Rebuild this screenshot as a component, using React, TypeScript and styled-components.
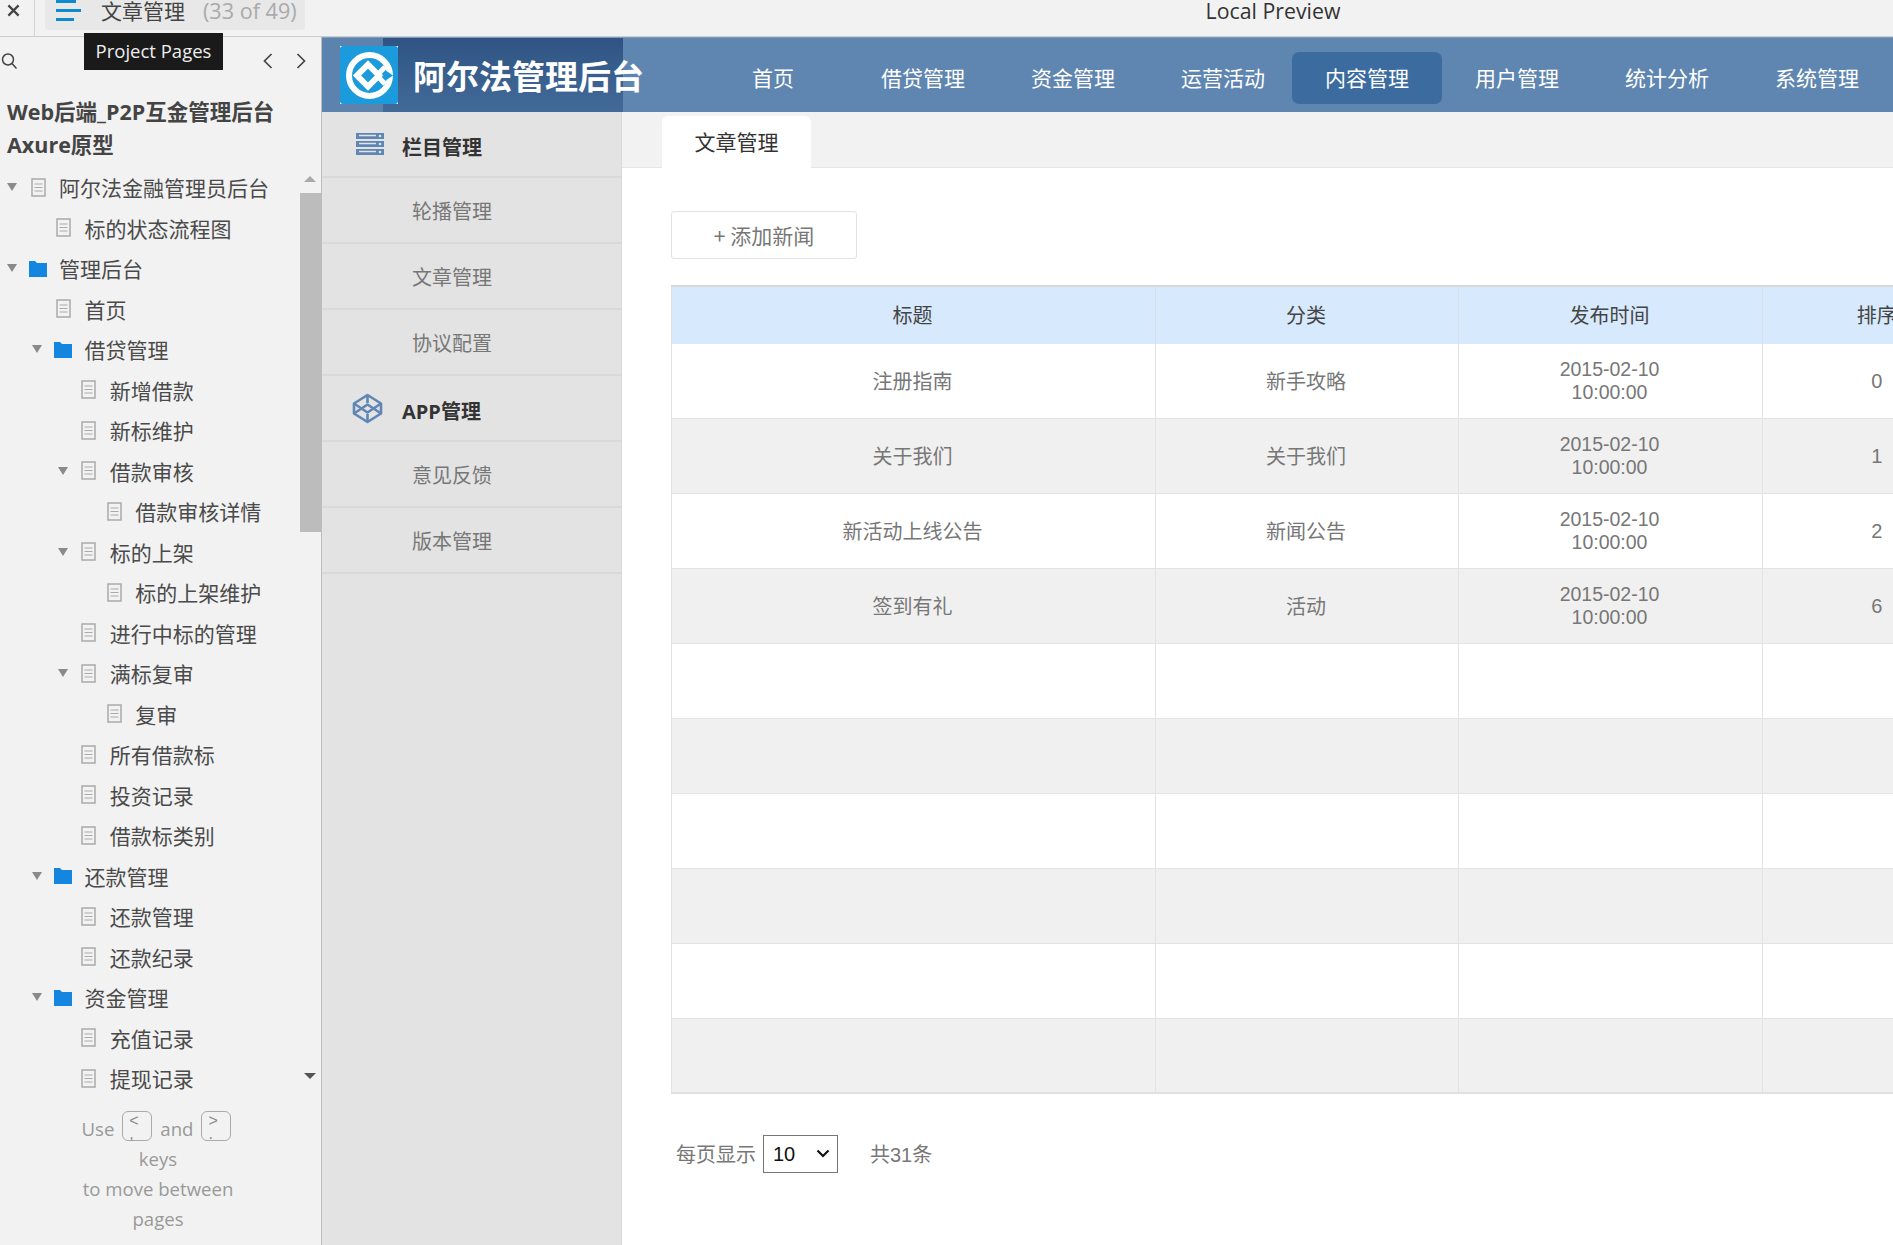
import React from "react";
import styled, { createGlobalStyle } from "styled-components";

const CJK = `"Noto Sans CJK SC", "Noto Sans", sans-serif`;
const LATIN = `"Open Sans", "Noto Sans CJK SC", sans-serif`;
const ARIAL = `"Liberation Sans", "Noto Sans CJK SC", sans-serif`;

interface TreeNode {
  label: string;
  depth: number;
  folder?: boolean;
  open?: boolean;
}

const treeNodes: TreeNode[] = [
  { label: "阿尔法金融管理员后台", depth: 0, open: true },
  { label: "标的状态流程图", depth: 1 },
  { label: "管理后台", depth: 0, folder: true, open: true },
  { label: "首页", depth: 1 },
  { label: "借贷管理", depth: 1, folder: true, open: true },
  { label: "新增借款", depth: 2 },
  { label: "新标维护", depth: 2 },
  { label: "借款审核", depth: 2, open: true },
  { label: "借款审核详情", depth: 3 },
  { label: "标的上架", depth: 2, open: true },
  { label: "标的上架维护", depth: 3 },
  { label: "进行中标的管理", depth: 2 },
  { label: "满标复审", depth: 2, open: true },
  { label: "复审", depth: 3 },
  { label: "所有借款标", depth: 2 },
  { label: "投资记录", depth: 2 },
  { label: "借款标类别", depth: 2 },
  { label: "还款管理", depth: 1, folder: true, open: true },
  { label: "还款管理", depth: 2 },
  { label: "还款纪录", depth: 2 },
  { label: "资金管理", depth: 1, folder: true, open: true },
  { label: "充值记录", depth: 2 },
  { label: "提现记录", depth: 2 },
];

const navItems = ["首页", "借贷管理", "资金管理", "运营活动", "内容管理", "用户管理", "统计分析", "系统管理"];

const articles = [
  { title: "注册指南", category: "新手攻略", order: "0" },
  { title: "关于我们", category: "关于我们", order: "1" },
  { title: "新活动上线公告", category: "新闻公告", order: "2" },
  { title: "签到有礼", category: "活动", order: "6" },
];

const GlobalStyle = createGlobalStyle`
  html, body {
    margin: 0;
    padding: 0;
    width: 1893px;
    height: 1245px;
    overflow: hidden;
    background: #fff;
    font-family: ${CJK};
  }
  * { box-sizing: border-box; }
`;

const Page = styled.div`
  width: 1893px;
  height: 1245px;
  display: flex;
  flex-direction: column;
  overflow: hidden;
  position: relative;
`;

const TopBar = styled.header`
  height: 37px;
  flex: none;
  display: flex;
  background: #f2f2f2;
  border-bottom: 1px solid #c9cdd1;
  position: relative;
`;

const CloseCell = styled.div`
  width: 35px;
  height: 36px;
  flex: none;
  display: flex;
  align-items: flex-start;
  border-right: 1px solid #d4d4d4;
  padding: 4px 0 0 7px;
`;

const PagesTab = styled.div`
  margin-left: 10px;
  width: 260px;
  height: 30px;
  flex: none;
  display: flex;
  align-items: center;
  padding: 0 0 10px 11px;
  background: #e8e8e8;
  border-radius: 0 0 4px 4px;

  svg {
    align-self: flex-start;
    flex: none;
  }
`;

const TabTitle = styled.span`
  margin-left: 20px;
  font-size: 21px;
  font-family: ${CJK};
  color: #444;
  white-space: nowrap;
`;

const TabCount = styled.span`
  margin-left: 18px;
  font-size: 21.6px;
  font-family: ${LATIN};
  color: #aaa;
  white-space: nowrap;
`;

const PreviewTitle = styled.div`
  position: absolute;
  left: 1205px;
  top: -4px;
  width: 136px;
  text-align: center;
  font-family: ${LATIN};
  font-size: 21.3px;
  color: #333;
  white-space: nowrap;
`;

const Tooltip = styled.div`
  position: absolute;
  left: 84px;
  top: 33px;
  width: 139px;
  height: 37px;
  z-index: 5;
  background: #1a1a1a;
  color: #eee;
  font-family: ${LATIN};
  font-size: 18.5px;
  line-height: 35px;
  text-align: center;
`;

const Body = styled.div`
  flex: 1;
  display: flex;
  min-height: 0;
`;

const Sidebar = styled.aside`
  width: 322px;
  flex: none;
  position: relative;
  display: flex;
  flex-direction: column;
  background: #f2f2f2;
  border-right: 1px solid #bdbdbd;
`;

const SearchRow = styled.div`
  height: 48px;
  flex: none;
  display: flex;
  align-items: center;
  padding: 0 15px 0 1px;
`;

const Pager = styled.div`
  margin-left: auto;
  display: flex;
  gap: 23px;
`;

const ProjectTitle = styled.h1`
  margin: 10px 0 6px;
  padding-left: 7px;
  font-size: 21.5px;
  line-height: 33px;
  font-weight: 700;
  color: #444;
  font-family: ${LATIN};
`;

const Tree = styled.div`
  flex: none;
`;

const TreeRow = styled.div<{ $depth: number }>`
  height: 40.5px;
  display: flex;
  align-items: center;
  padding-left: ${(p) => 7 + p.$depth * 25.4}px;
  font-size: 21px;
  color: #4a4a4a;
  white-space: nowrap;
`;

const ToggleSlot = styled.span`
  width: 22px;
  flex: none;
  display: flex;
  align-items: center;
`;

const Triangle = styled.span`
  width: 0;
  height: 0;
  border-left: 5.5px solid transparent;
  border-right: 5.5px solid transparent;
  border-top: 8px solid #8a8a8a;
`;

const IconSlot = styled.span`
  width: 18px;
  height: 20px;
  flex: none;
  display: flex;
  align-items: center;
  justify-content: center;
`;

const RowLabel = styled.span`
  margin-left: 12px;
`;

const ScrollTrack = styled.div`
  position: absolute;
  right: 0;
  top: 156px;
  width: 21px;
  height: 339px;
  background: #bcbcbc;
`;

const ScrollArrow = styled.span<{ $up?: boolean }>`
  position: absolute;
  left: 304px;
  top: ${(p) => (p.$up ? 139 : 1036)}px;
  width: 0;
  height: 0;
  border-left: 6px solid transparent;
  border-right: 6px solid transparent;
  ${(p) =>
    p.$up
      ? "border-bottom: 6px solid #aaa;"
      : "border-top: 6px solid #555;"}
`;

const KeysHint = styled.div`
  margin-top: 7px;
  width: 316px;
  text-align: center;
  font-family: ${LATIN};
  font-size: 18.6px;
  line-height: 30px;
  color: #999;
`;

const KeyLine = styled.div`
  display: flex;
  justify-content: center;
  align-items: flex-end;
  gap: 8px;
  height: 38px;
  padding-right: 3px;
  line-height: 30px;
`;

const KeyCap = styled.span`
  width: 30px;
  height: 30px;
  margin-bottom: 3px;
  border: 1.5px solid #aaa;
  border-radius: 6px;
  font-family: ${ARIAL};
  font-size: 16px;
  line-height: 13px;
  color: #888;
  text-align: left;
  padding: 2px 0 0 6px;
  white-space: pre;
`;

const Workspace = styled.div`
  flex: 1;
  min-width: 0;
  display: flex;
  flex-direction: column;
`;

const Brand = styled.div`
  height: 75px;
  flex: none;
  display: flex;
  background: #5f86b0;
  border-top: 1px solid #7f9cbc;
`;

const BrandLeft = styled.div`
  width: 301px;
  flex: none;
  display: flex;
  align-items: center;
  padding-left: 18px;
  background: linear-gradient(to right, #5c83ad 61px, transparent 61px),
    linear-gradient(to bottom, #2f5483, #426a98);

  svg {
    flex: none;
  }
`;

const BrandName = styled.div`
  margin-left: 15px;
  font-size: 33px;
  font-weight: 700;
  color: #fff;
  white-space: nowrap;
`;

const Nav = styled.nav`
  display: flex;
  align-items: flex-start;
  padding: 14px 0 0 75px;
`;

const NavItem = styled.div<{ $active?: boolean }>`
  width: 150px;
  height: 52px;
  flex: none;
  margin-left: ${(p) => (p.$active ? -6 : 0)}px;
  padding-top: 4px;
  line-height: 42px;
  text-align: center;
  font-size: 21px;
  color: #fff;
  border-radius: 7px;
  background: ${(p) => (p.$active ? "#3c6c9f" : "transparent")};
`;

const Work = styled.div`
  flex: 1;
  min-height: 0;
  display: flex;
`;

const Menu = styled.div`
  width: 300px;
  flex: none;
  background: #e3e3e3;
  border-right: 1px solid #d8d8d8;
`;

const MenuHead = styled.div`
  height: 66px;
  display: flex;
  align-items: center;
  padding: 4px 0 0 30px;
  border-bottom: 2px solid #d9d9d9;
  font-size: 20px;
  font-weight: 700;
  color: #333;
  font-family: ${LATIN};
`;

const MenuIcon = styled.span<{ $inset?: number }>`
  width: 50px;
  flex: none;
  display: flex;
  margin-top: -4px;
  padding-left: ${(p) => p.$inset ?? 0}px;
`;

const MenuLink = styled.div`
  height: 66px;
  padding-left: 90px;
  line-height: 66px;
  border-bottom: 2px solid #d9d9d9;
  font-size: 20px;
  color: #777;
`;

const Content = styled.main`
  flex: 1;
  min-width: 0;
  background: #fff;
  overflow: hidden;
`;

const TabBar = styled.div`
  height: 56px;
  display: flex;
  align-items: flex-end;
  padding-left: 40px;
  background: #f2f2f2;
  border-bottom: 1px solid #e6e6e6;
`;

const Tab = styled.div`
  width: 149px;
  height: 52px;
  margin-bottom: -1px;
  background: #fff;
  border-radius: 6px 6px 0 0;
  text-align: center;
  line-height: 50px;
  font-size: 21px;
  color: #333;
`;

const Pane = styled.div`
  padding: 43px 0 0 49px;
`;

const AddButton = styled.button`
  display: block;
  width: 186px;
  height: 48px;
  padding: 0;
  background: #fff;
  border: 1px solid #e3e3e3;
  border-radius: 3px;
  font-family: ${CJK};
  font-size: 21px;
  color: #777;
`;

const Table = styled.table`
  margin-top: 26px;
  width: 1321px;
  table-layout: fixed;
  border-collapse: collapse;
  border-top: 2px solid #d9d9d9;
  border-left: 1px solid #e3e3e3;
  border-bottom: 2px solid #e0e0e0;
`;

const HeadCell = styled.th`
  height: 58px;
  padding: 0 2px 2px 0;
  background: #d7e9fc;
  border-left: 1px solid #d9dfe5;
  font-weight: 400;
  font-size: 20px;
  color: #444;
`;

const Row = styled.tr<{ $striped: boolean }>`
  background: ${(p) => (p.$striped ? "#f0f0f0" : "#fff")};
`;

const Cell = styled.td<{ $plain?: boolean }>`
  height: 74.9px;
  padding: ${(p) => (p.$plain ? "0 2px 0 0" : "3px 2px 0 0")};
  border-left: 1px solid #e3e3e3;
  border-bottom: 1px solid #e3e3e3;
  text-align: center;
  font-family: ${ARIAL};
  font-size: 20px;
  line-height: 23px;
  color: #777;
`;

const DateLine = styled.div`
  font-size: 19.5px;
`;

const PagerBar = styled.div`
  margin-top: 41px;
  padding-left: 5px;
  display: flex;
  align-items: center;
  font-size: 20px;
  color: #777;
  font-family: ${ARIAL};
`;

const PageSize = styled.select`
  margin: 0 32px 0 7px;
  width: 75px;
  height: 38px;
  padding-left: 9px;
  appearance: none;
  font-family: ${ARIAL};
  font-size: 20px;
  color: #111;
  background: #fff
    url("data:image/svg+xml,%3Csvg xmlns='http://www.w3.org/2000/svg' width='14' height='9' viewBox='0 0 14 9'%3E%3Cpath d='M1.5 1.5 7 7l5.5-5.5' fill='none' stroke='%23111' stroke-width='2.2'/%3E%3C/svg%3E")
    no-repeat right 7px center;
  border: 1px solid #767676;
  border-radius: 0;
`;

const PageIcon = () => (
  <svg width="15" height="19" viewBox="0 0 15 19" fill="none" stroke="#aaa">
    <rect x="1" y="1" width="13" height="17" strokeWidth="1.5" />
    <path d="M3.5 6h8M3.5 9.5h8M3.5 13h8" strokeWidth="1.2" />
  </svg>
);

const FolderIcon = () => (
  <svg width="18" height="17" viewBox="0 0 18 17">
    <path d="M0 1h6l2 2h10v14H0z" fill="#1586e0" />
  </svg>
);

const LogoMark = () => (
  <svg width="58" height="58" viewBox="0 0 58 58">
    <rect width="58" height="58" fill="#fff" />
    <rect width="58" height="58" rx="3" fill="#1b9bdc" />
    <circle cx="29.5" cy="29.5" r="20.5" fill="none" stroke="#fff" strokeWidth="6" />
    <path d="M28 18.5 39 29.5 28 40.5 17 29.5Z" fill="none" stroke="#fff" strokeWidth="6" />
    <path d="M37 29.5 45 21M37 29.5 45 38" stroke="#fff" strokeWidth="5" />
    <path d="M46.500 25 43 29.5 46.500 34 53 29.5Z" fill="#1b9bdc" />
  </svg>
);

const ServerIcon = () => (
  <svg width="28" height="22" viewBox="0 0 28 22">
    <path d="M0 0h28v6H0zM0 8h28v6H0zM0 16h28v6H0z" fill="#5f86b5" />
    <path d="M3 2.5h17M3 10.5h17M3 18.5h17" stroke="#e3e3e3" strokeWidth="1.6" />
    <circle cx="24" cy="3" r="1.3" fill="#e3e3e3" />
    <circle cx="24" cy="11" r="1.3" fill="#e3e3e3" />
    <circle cx="24" cy="19" r="1.3" fill="#e3e3e3" />
  </svg>
);

const CodepenIcon = () => (
  <svg width="31" height="31" viewBox="0 0 31 31" fill="none" stroke="#5f86b5" strokeWidth="2.6" strokeLinejoin="round">
    <path d="M15.5 2 29 10.5v10L15.5 29 2 20.5v-10z" />
    <path d="M15.5 2v8M15.5 21v8M2 10.5l13.5 9 13.5-9M2 20.5l13.5-9 13.5 9" />
  </svg>
);

const Hamburger = () => (
  <svg width="25" height="22" viewBox="0 0 25 22" stroke="#0c8ccf" strokeWidth="3">
    <path d="M0 1.5h20M0 10.5h25M0 19.5h18" />
  </svg>
);

const CloseIcon = () => (
  <svg width="13" height="13" viewBox="0 0 14 14" stroke="#444" strokeWidth="2.4">
    <path d="M1.5 1.5l11 11M12.5 1.5l-11 11" />
  </svg>
);

const SearchIcon = () => (
  <svg width="18" height="18" viewBox="0 0 18 18" fill="none" stroke="#444" strokeWidth="1.5">
    <circle cx="7" cy="7.5" r="5.5" />
    <path d="M11 11.5l4.5 5" />
  </svg>
);

const Chevron = ({ flip }: { flip?: boolean }) => (
  <svg width="10" height="16" viewBox="0 0 10 16" fill="none" stroke="#444" strokeWidth="1.7">
    <path d={flip ? "M1.5 1l7 7-7 7" : "M8.5 1l-7 7 7 7"} />
  </svg>
);

export default function App() {
  return (
    <Page>
      <GlobalStyle />
      <TopBar>
        <CloseCell>
          <CloseIcon />
        </CloseCell>
        <PagesTab>
          <Hamburger />
          <TabTitle>文章管理</TabTitle>
          <TabCount>(33 of 49)</TabCount>
        </PagesTab>
        <PreviewTitle>Local Preview</PreviewTitle>
        <Tooltip>Project Pages</Tooltip>
      </TopBar>
      <Body>
        <Sidebar>
          <SearchRow>
            <SearchIcon />
            <Pager>
              <Chevron />
              <Chevron flip />
            </Pager>
          </SearchRow>
          <ProjectTitle>
            Web后端_P2P互金管理后台
            <br />
            Axure原型
          </ProjectTitle>
          <Tree>
            {treeNodes.map((node, i) => (
              <TreeRow key={i} $depth={node.depth}>
                <ToggleSlot>{node.open && <Triangle />}</ToggleSlot>
                <IconSlot>{node.folder ? <FolderIcon /> : <PageIcon />}</IconSlot>
                <RowLabel>{node.label}</RowLabel>
              </TreeRow>
            ))}
          </Tree>
          <ScrollTrack />
          <ScrollArrow $up />
          <ScrollArrow />
          <KeysHint>
            <KeyLine>
              <span>Use</span>
              <KeyCap>{"<\n,"}</KeyCap>
              <span>and</span>
              <KeyCap>{">\n."}</KeyCap>
            </KeyLine>
            <div>keys</div>
            <div>to move between</div>
            <div>pages</div>
          </KeysHint>
        </Sidebar>
        <Workspace>
          <Brand>
            <BrandLeft>
              <LogoMark />
              <BrandName>阿尔法管理后台</BrandName>
            </BrandLeft>
            <Nav>
              {navItems.map((item) => (
                <NavItem key={item} $active={item === "内容管理"}>
                  {item}
                </NavItem>
              ))}
            </Nav>
          </Brand>
          <Work>
            <Menu>
              <MenuHead>
                <MenuIcon $inset={4}>
                  <ServerIcon />
                </MenuIcon>
                栏目管理
              </MenuHead>
              <MenuLink>轮播管理</MenuLink>
              <MenuLink>文章管理</MenuLink>
              <MenuLink>协议配置</MenuLink>
              <MenuHead>
                <MenuIcon>
                  <CodepenIcon />
                </MenuIcon>
                APP管理
              </MenuHead>
              <MenuLink>意见反馈</MenuLink>
              <MenuLink>版本管理</MenuLink>
            </Menu>
            <Content>
              <TabBar>
                <Tab>文章管理</Tab>
              </TabBar>
              <Pane>
                <AddButton>+ 添加新闻</AddButton>
                <Table>
                  <colgroup>
                    <col width="484" />
                    <col width="303" />
                    <col width="304" />
                    <col width="230" />
                  </colgroup>
                  <thead>
                    <tr>
                      <HeadCell>标题</HeadCell>
                      <HeadCell>分类</HeadCell>
                      <HeadCell>发布时间</HeadCell>
                      <HeadCell>排序</HeadCell>
                    </tr>
                  </thead>
                  <tbody>
                    {Array.from({ length: 10 }).map((_, i) => {
                      const row = articles[i];
                      return (
                        <Row key={i} $striped={i % 2 === 1}>
                          <Cell>{row?.title}</Cell>
                          <Cell>{row?.category}</Cell>
                          <Cell $plain>
                            {row && (
                              <>
                                <DateLine>2015-02-10</DateLine>
                                <DateLine>10:00:00</DateLine>
                              </>
                            )}
                          </Cell>
                          <Cell $plain>{row?.order}</Cell>
                        </Row>
                      );
                    })}
                  </tbody>
                </Table>
                <PagerBar>
                  每页显示
                  <PageSize defaultValue="10">
                    <option value="10">10</option>
                    <option value="20">20</option>
                    <option value="50">50</option>
                  </PageSize>
                  共31条
                </PagerBar>
              </Pane>
            </Content>
          </Work>
        </Workspace>
      </Body>
    </Page>
  );
}
